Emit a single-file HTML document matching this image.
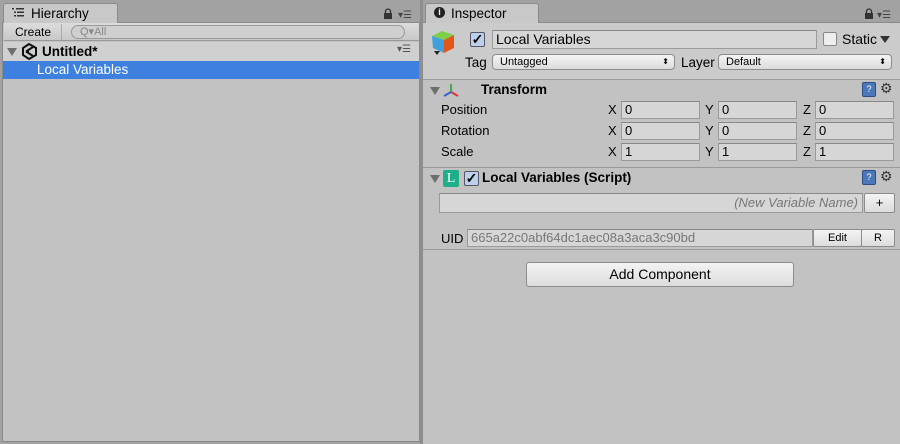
<!DOCTYPE html>
<html><head><style>
*{margin:0;padding:0;box-sizing:border-box}
body{width:900px;height:444px;background:#a2a2a2;font-family:"Liberation Sans",sans-serif;font-size:13px;color:#000;position:relative;overflow:hidden}
.a{position:absolute}
.tab{background:#c8c8c8;border:1px solid #8a8a8a;border-bottom:none;border-radius:3px 3px 0 0;height:20px;top:3px;font-size:13.5px;line-height:19px}
.fld{background:#d6d6d6;border:1px solid #9a9a9a;border-top-color:#888;height:18px;font-size:13px;line-height:16px;padding-left:3px}
.btn{background:linear-gradient(#f4f4f4,#dcdcdc);border:1px solid #8c8c8c;border-radius:3px;text-align:center}
.lbl{font-size:13px}
.tri{width:0;height:0;border-left:5px solid transparent;border-right:5px solid transparent;border-top:8px solid #6e6e6e}
</style></head><body>
<!-- hierarchy -->
<div class="a" style="left:2px;top:22px;width:418px;height:420px;background:#c2c2c2;border:1px solid #8a8a8a"></div>
<div class="a tab" style="left:3px;width:115px;background:#c8c8c8;padding-left:27px">Hierarchy</div>
<svg class="a" style="left:11px;top:7px" width="14" height="11"><g fill="#333"><rect x="1" y="1" width="2" height="1.5"/><rect x="5" y="1" width="8" height="1.5"/><rect x="3" y="4.5" width="2" height="1.5"/><rect x="6" y="4.5" width="7" height="1.5"/><rect x="3" y="8" width="2" height="1.5"/><rect x="6" y="8" width="7" height="1.5"/></g></svg>
<div class="a" style="left:4px;top:23px;width:415px;height:18px;background:linear-gradient(#dcdcdc,#c8c8c8);border-bottom:1px solid #999"></div>
<div class="a" style="left:8px;top:24px;width:54px;height:16px;border-right:1px solid #aaa;font-size:12px;line-height:16px;padding-left:7px">Create <span style="font-size:7px">▼</span></div>
<div class="a" style="left:71px;top:25px;width:334px;height:14px;border:1px solid #999;border-radius:8px;background:#cfcfcf;font-size:11px;line-height:12px;padding-left:8px;color:#888">Q▾All</div>
<div class="a" style="left:3px;top:42px;width:416px;height:19px;background:#d0d0d0"></div>
<div class="a tri" style="left:7px;top:48px"></div>
<svg class="a" style="left:21px;top:43px" width="17" height="17"><path d="M8 1 L15 5 L15 12 L8 16 L2 12 L2 5 Z" fill="none" stroke="#111" stroke-width="2"/><path d="M5 8.5 L12 4 M5 8.5 L12 13 M5 8.5 L8 8.5" stroke="#111" stroke-width="2"/></svg>
<div class="a" style="left:42px;top:43px;font-weight:bold;font-size:13.5px;line-height:17px">Untitled*</div>
<div class="a" style="left:397px;top:44px;font-size:10px;color:#555">▾☰</div>
<div class="a" style="left:3px;top:61px;width:416px;height:18px;background:#3d80df;color:#fff;padding-left:34px;font-size:13.5px;line-height:18px">Local Variables</div>
<svg class="a" style="left:383px;top:8px" width="10" height="11"><path d="M2.5 5 V3.5 a2.5 2.5 0 0 1 5 0 V5" fill="none" stroke="#333" stroke-width="1.3"/><rect x="1" y="5" width="8" height="6" fill="#333"/></svg>
<div class="a" style="left:398px;top:10px;font-size:10px;color:#444">▾☰</div>
<!-- divider -->
<div class="a" style="left:420px;top:0;width:3px;height:444px;background:#8e8e8e"></div>
<!-- inspector -->
<div class="a" style="left:423px;top:22px;width:477px;height:422px;background:#c2c2c2;border-top:1px solid #8a8a8a"></div>
<div class="a tab" style="left:425px;width:114px;padding-left:25px">Inspector</div>
<div class="a" style="left:434px;top:7px;width:11px;height:11px;border-radius:50%;background:#222;color:#fff;font-size:9px;font-weight:bold;text-align:center;line-height:11px">i</div>
<svg class="a" style="left:864px;top:8px" width="10" height="11"><path d="M2.5 5 V3.5 a2.5 2.5 0 0 1 5 0 V5" fill="none" stroke="#333" stroke-width="1.3"/><rect x="1" y="5" width="8" height="6" fill="#333"/></svg>
<div class="a" style="left:877px;top:10px;font-size:10px;color:#444">▾☰</div>
<div class="a" style="left:423px;top:23px;width:477px;height:57px;background:#cbcbcb;border-bottom:1px solid #9a9a9a"></div>
<svg class="a" style="left:430px;top:30px" width="28" height="28"><polygon points="2,6 12,1 24,5 14,10" fill="#7fce4a"/><polygon points="2,6 14,10 14,23 3,18" fill="#3fa0dc"/><polygon points="14,10 24,5 24,18 14,23" fill="#e2561c"/><polygon points="4,21 10,21 7,25" fill="#222"/></svg>
<div class="a" style="left:470px;top:32px;width:15px;height:15px;background:#bcd0ec;border:1px solid #556;border-radius:2px;font-size:14px;line-height:13px;text-align:center;font-weight:bold">✓</div>
<div class="a fld" style="left:492px;top:30px;width:325px;height:19px;font-size:14px">Local Variables</div>
<div class="a" style="left:823px;top:32px;width:14px;height:14px;background:#eee;border:1px solid #888;border-radius:2px"></div>
<div class="a" style="left:842px;top:31px;font-size:14px">Static</div>
<div class="a" style="left:880px;top:36px;border-left:5px solid transparent;border-right:5px solid transparent;border-top:7px solid #333;width:0;height:0"></div>
<div class="a" style="left:465px;top:55px;font-size:13.5px">Tag</div>
<div class="a btn" style="left:492px;top:54px;width:183px;height:16px;text-align:left;padding-left:7px;font-size:11px;line-height:14px;border-radius:4px">Untagged<span style="position:absolute;right:5px;font-size:8px">⬍</span></div>
<div class="a" style="left:681px;top:55px;font-size:13.5px">Layer</div>
<div class="a btn" style="left:718px;top:54px;width:174px;height:16px;text-align:left;padding-left:7px;font-size:11px;line-height:14px;border-radius:4px">Default<span style="position:absolute;right:5px;font-size:8px">⬍</span></div>
<!-- transform -->
<div class="a tri" style="left:430px;top:87px"></div>
<svg class="a" style="left:442px;top:82px" width="18" height="16"><line x1="9" y1="2" x2="9" y2="10" stroke="#4a4" stroke-width="2"/><line x1="9" y1="10" x2="2" y2="14" stroke="#36c" stroke-width="2"/><line x1="9" y1="10" x2="16" y2="14" stroke="#d33" stroke-width="2"/></svg>
<div class="a" style="left:481px;top:82px;font-weight:bold;font-size:13.5px">Transform</div>
<div class="a" style="left:862px;top:82px;width:14px;height:15px;background:#4a78b8;border:1px solid #2c4f80;border-radius:2px;color:#fff;font-size:9px;text-align:center;line-height:13px">?</div>
<div class="a" style="left:880px;top:80px;font-size:14px;color:#333">⚙</div>
<div class="a lbl" style="left:441px;top:102px">Position</div>
<div class="a lbl" style="left:441px;top:123px">Rotation</div>
<div class="a lbl" style="left:441px;top:144px">Scale</div>
<div class="a lbl" style="left:608px;top:102px">X</div><div class="a fld" style="left:621px;top:101px;width:79px">0</div>
<div class="a lbl" style="left:705px;top:102px">Y</div><div class="a fld" style="left:718px;top:101px;width:79px">0</div>
<div class="a lbl" style="left:803px;top:102px">Z</div><div class="a fld" style="left:815px;top:101px;width:79px">0</div>
<div class="a lbl" style="left:608px;top:123px">X</div><div class="a fld" style="left:621px;top:122px;width:79px">0</div>
<div class="a lbl" style="left:705px;top:123px">Y</div><div class="a fld" style="left:718px;top:122px;width:79px">0</div>
<div class="a lbl" style="left:803px;top:123px">Z</div><div class="a fld" style="left:815px;top:122px;width:79px">0</div>
<div class="a lbl" style="left:608px;top:144px">X</div><div class="a fld" style="left:621px;top:143px;width:79px">1</div>
<div class="a lbl" style="left:705px;top:144px">Y</div><div class="a fld" style="left:718px;top:143px;width:79px">1</div>
<div class="a lbl" style="left:803px;top:144px">Z</div><div class="a fld" style="left:815px;top:143px;width:79px">1</div>
<div class="a" style="left:423px;top:167px;width:477px;height:1px;background:#999"></div>
<!-- script -->
<div class="a tri" style="left:430px;top:175px"></div>
<div class="a" style="left:443px;top:170px;width:16px;height:17px;background:#1fae8a;border-radius:2px;color:#fff;font-family:'Liberation Serif',serif;font-size:14px;text-align:center;line-height:17px">L</div>
<div class="a" style="left:464px;top:171px;width:15px;height:15px;background:#bcd0ec;border:1px solid #556;border-radius:2px;font-size:14px;line-height:13px;text-align:center;font-weight:bold">✓</div>
<div class="a" style="left:482px;top:170px;font-weight:bold;font-size:13.5px">Local Variables (Script)</div>
<div class="a" style="left:862px;top:170px;width:14px;height:15px;background:#4a78b8;border:1px solid #2c4f80;border-radius:2px;color:#fff;font-size:9px;text-align:center;line-height:13px">?</div>
<div class="a" style="left:880px;top:168px;font-size:14px;color:#333">⚙</div>
<div class="a fld" style="left:439px;top:193px;width:424px;height:20px;text-align:right;padding-right:4px;font-style:italic;color:#777;line-height:18px">(New Variable Name)</div>
<div class="a btn" style="left:864px;top:193px;width:31px;height:20px;border-radius:2px;line-height:18px">+</div>
<div class="a lbl" style="left:441px;top:231px">UID</div>
<div class="a fld" style="left:467px;top:229px;width:346px;height:18px;color:#777;font-size:13px">665a22c0abf64dc1aec08a3aca3c90bd</div>
<div class="a btn" style="left:813px;top:229px;width:49px;height:18px;font-size:11px;line-height:16px;border-radius:2px">Edit</div>
<div class="a btn" style="left:861px;top:229px;width:34px;height:18px;font-size:11px;line-height:16px;border-radius:2px">R</div>
<div class="a" style="left:423px;top:249px;width:477px;height:1px;background:#999"></div>
<div class="a btn" style="left:526px;top:262px;width:268px;height:25px;font-size:14px;line-height:23px;border-radius:3px">Add Component</div>
</body></html>
